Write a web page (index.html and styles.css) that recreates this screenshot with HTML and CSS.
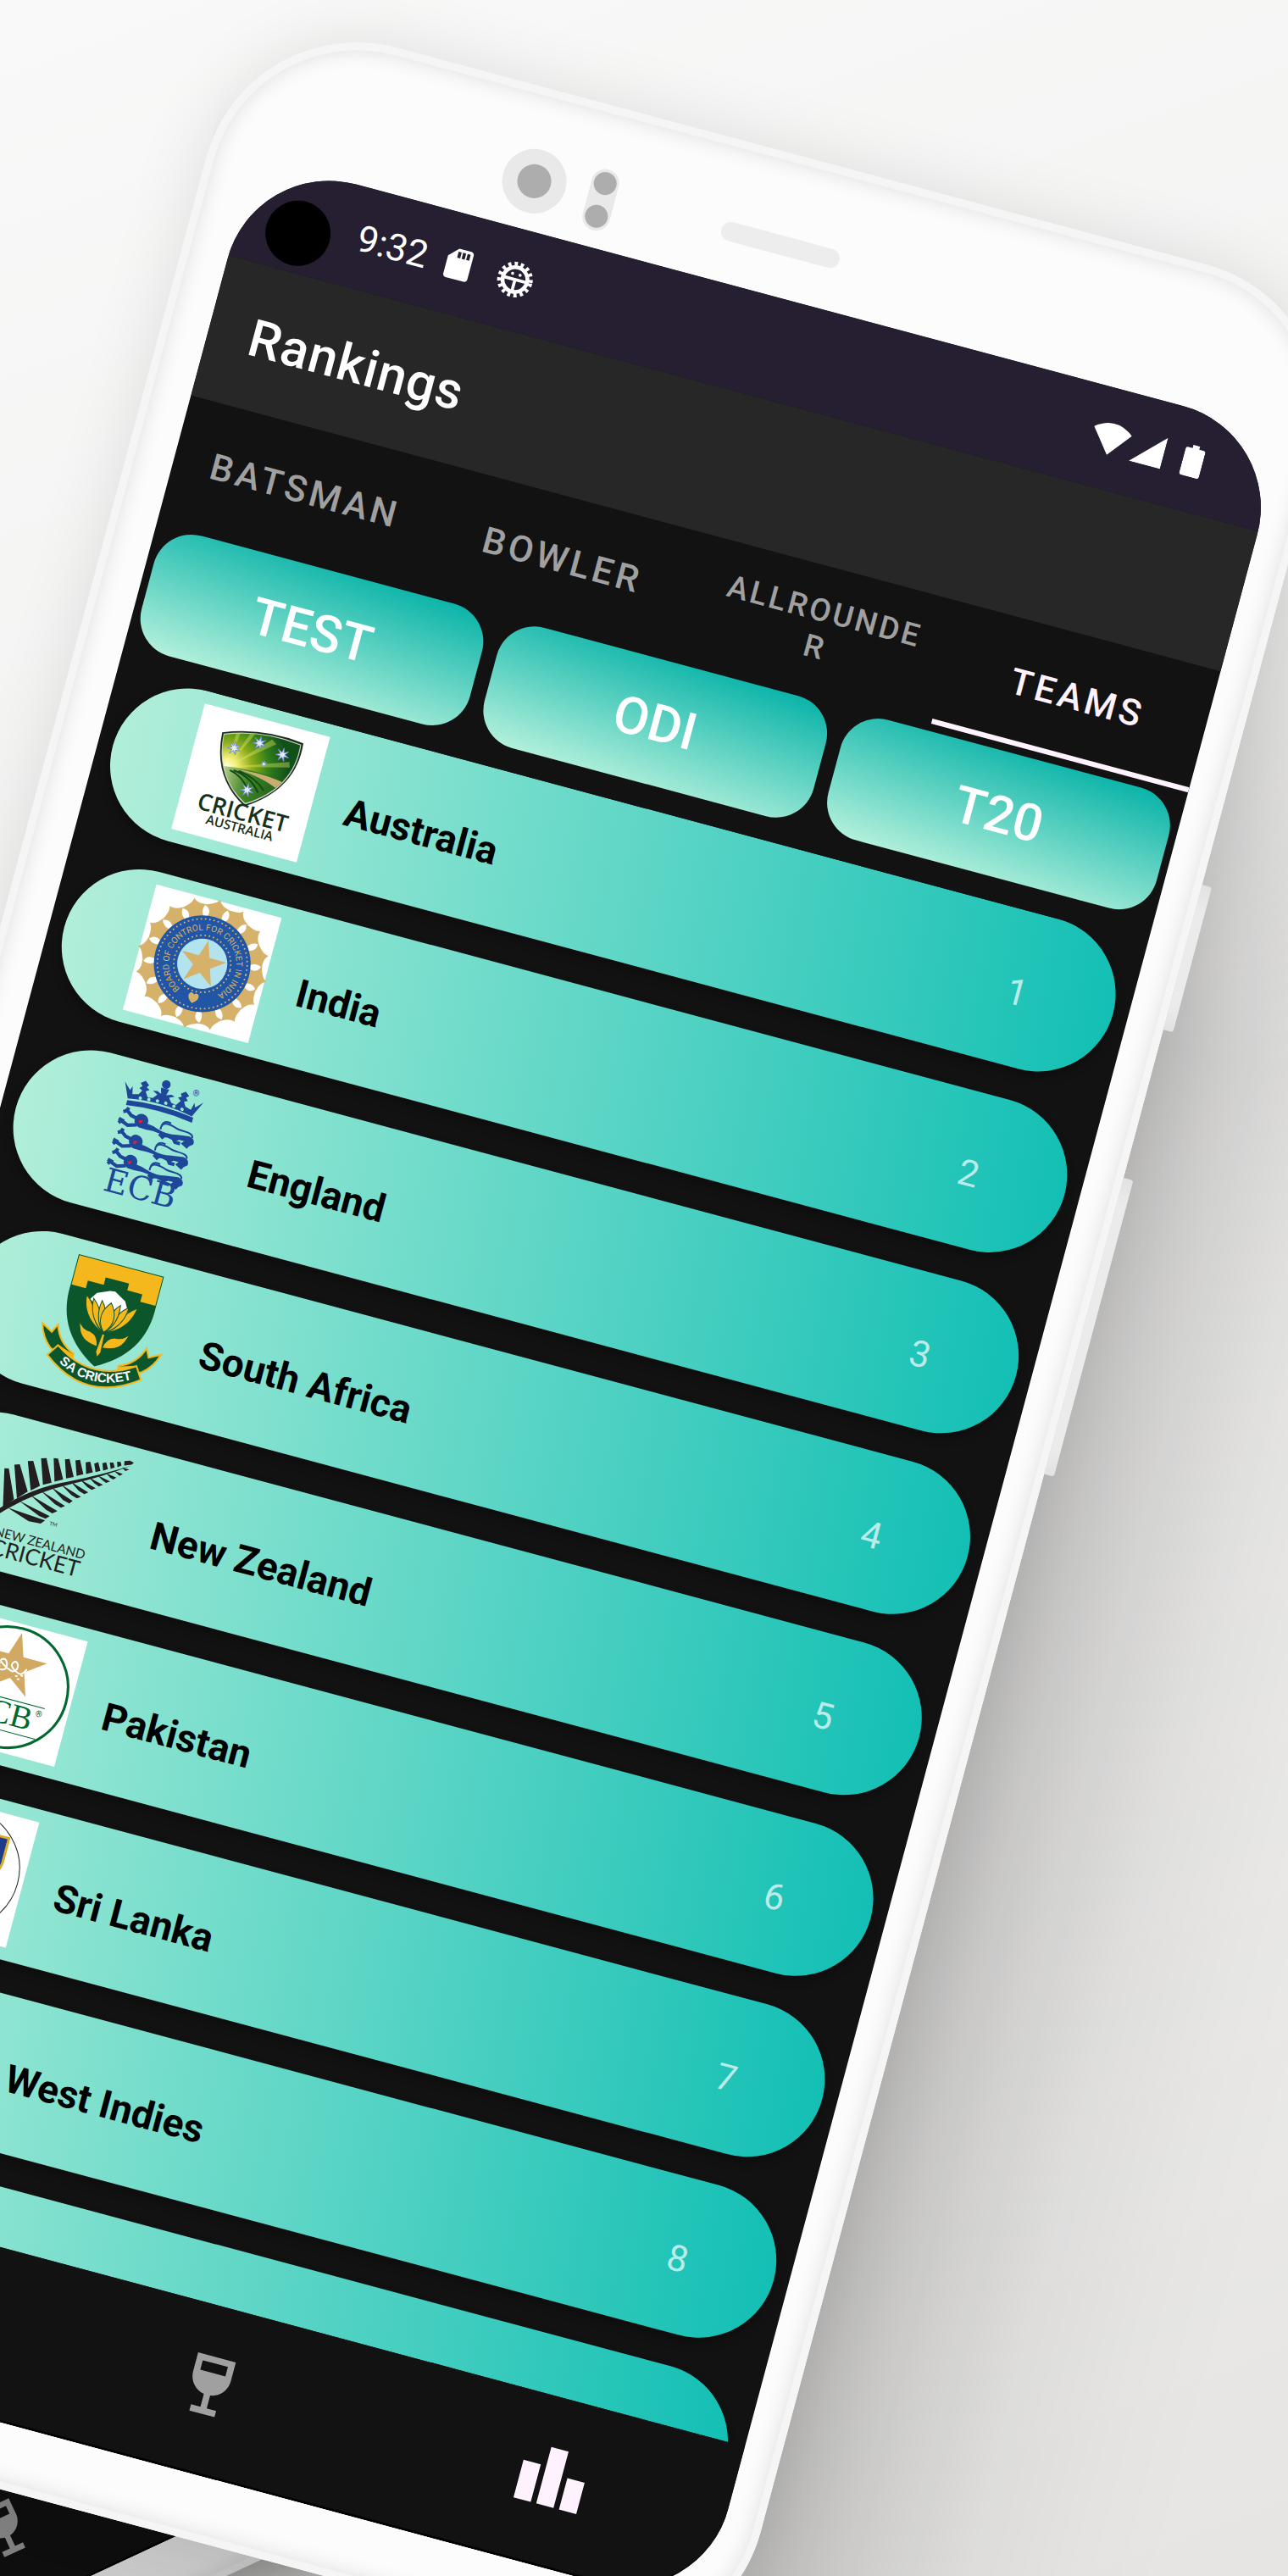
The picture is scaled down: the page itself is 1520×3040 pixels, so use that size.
FILE: index.html
```html
<!DOCTYPE html>
<html lang="en">
<head>
<meta charset="utf-8">
<meta name="viewport" content="width=device-width, initial-scale=1">
<title>Rankings</title>
<link rel="stylesheet" href="styles.css">
</head>
<body>
<svg class="defs" aria-hidden="true">
  <defs>
    <symbol id="i-cup" viewBox="0 0 24 24"><path d="M6 3v6c0 2.97 2.16 5.43 5 5.91V19H8v2h8v-2h-3v-4.09c2.84-.48 5-2.94 5-5.91V3H6zm10 5H8V5h8v3z"/></symbol>
    <symbol id="i-board" viewBox="0 0 24 24"><path d="M7.5 21H2V9h5.500v12zm7.250-18h-5.500v18h5.500V3zM22 11h-5.500v10H22V11z"/></symbol>
    <path id="star5" d="M0-10 2.250-3.090 9.510-3.090 3.630 1.180 5.880 8.090 0 3.820-5.880 8.090-3.630 1.180-9.510-3.090-2.250-3.090z"/>
    <path id="star7" d="M0-10 1.500-3.100 7.800-6.200 3.400-.8 9.700 2.200 2.700 2.200 4.300 9 0 3.500-4.300 9-2.700 2.200-9.700 2.200-3.400-.8-7.800-6.200-1.500-3.100z"/>
    <path id="petal" d="M-9-53C-6-60-8-65-15-67C-8-70-2-71 1-77C3-72 8-69 14-68C9-65 7-60 9-53Z"/>
    <g id="lion">
      <path d="M22 11Q34 9 46 13T70 14L84 12Q92 13 91 20L86 24 78 22 84 19 74 19 70 22 60 20 54 21 52 18 42 17Q32 18 24 17z"/>
      <path class="limb" d="M22 8L13 6 5 0M3 4l4-2 1-4M22 15L12 18 4 15M1 18l3-4-4-1M50 18l6 4M66 18l4 5h6M84 17l-4 5 6 3"/>
      <circle cx="26" cy="9" r="8"/>
      <path class="tail" d="M50 8q2-7 10-5M50 13c-2-12 12-8 18-6s20-1 20 6"/>
      <path class="tongue" d="M23 9l5-1-2 4h-2z"/>
    </g>
  </defs>
</svg>

<main class="stage">
  <div class="phone phone-back" aria-hidden="true">
    <div class="screen">
      <div class="filler"></div>
      <div class="nav"><span class="nav-item"><svg class="nav-icon"><use href="#i-cup"/></svg></span></div>
    </div>
  </div>

  <div class="cast"></div>

  <div class="phone phone-front">
    <span class="side-key power"></span>
    <span class="side-key volume"></span>
    <span class="lens"></span>
    <span class="sensor"></span>
    <span class="speaker"></span>

    <div class="screen">
      <div class="status">
        <span class="punch"></span>
        <span class="clock">9:32</span>
        <svg class="status-icon sd" viewBox="0 0 24 24"><path d="M18 2h-8L4 8v12c0 1.100.9 2 2 2h12c1.100 0 2-.9 2-2V4c0-1.100-.9-2-2-2zm-6 6h-2V4h2v4zm3 0h-2V4h2v4zm3 0h-2V4h2v4z"/></svg>
        <svg class="status-icon bug" viewBox="0 0 48 48">
          <circle class="teeth" cx="24" cy="24" r="20"/>
          <circle class="ring" cx="24" cy="24" r="16"/>
          <path class="line" d="M8 24h32M24 24v16"/>
          <circle cx="19" cy="17" r="2"/><circle cx="29" cy="17" r="2"/>
        </svg>
        <span class="spacer"></span>
        <svg class="wifi" viewBox="0 0 46 38"><path d="M0 9Q23-9 46 9L23 38z"/></svg>
        <svg class="signal" viewBox="0 0 38 38"><path d="M38 0v38H0z"/></svg>
        <svg class="battery" viewBox="0 0 24 38"><path d="M8 0h8v4h5q3 0 3 3v28q0 3-3 3H3q-3 0-3-3V7q0-3 3-3h5z"/></svg>
      </div>

      <header class="appbar"><h1>Rankings</h1></header>

      <nav class="tabs">
        <button class="tab">BATSMAN</button>
        <button class="tab">BOWLER</button>
        <button class="tab tab-small">ALLROUNDE<br>R</button>
        <button class="tab active">TEAMS</button>
      </nav>

      <div class="formats">
        <button class="format">TEST</button>
        <button class="format">ODI</button>
        <button class="format">T20</button>
      </div>

      <ol class="teams">
        <li class="team">
          <svg class="logo boxed" viewBox="0 0 150 150">
            <defs>
              <radialGradient id="sun" gradientUnits="userSpaceOnUse" cx="44" cy="64" r="70"><stop offset="0" stop-color="#fffff0"/><stop offset=".15" stop-color="#f4f07a"/><stop offset=".4" stop-color="#8fae1a"/><stop offset=".7" stop-color="#2f7d1a"/><stop offset="1" stop-color="#12501a"/></radialGradient>
              <linearGradient id="field" x1="0" y1="0" x2="1" y2="0"><stop offset="0" stop-color="#dfe8b0"/><stop offset=".4" stop-color="#3f8426"/><stop offset="1" stop-color="#0f4d18"/></linearGradient>
              <clipPath id="shield"><path d="M31 29Q73 12 119 18Q124 68 75 99Q34 78 31 29z"/></clipPath>
            </defs>
            <path fill="#1c2c1c" d="M28 27Q73 9 122 15Q128 69 75 103Q31 80 28 27z"/>
            <path fill="#c9d3c4" d="M30 28Q73 11 120 17Q126 69 75 101Q33 79 30 28z"/>
            <g clip-path="url(#shield)">
              <path fill="url(#sun)" d="M20 10h110v95H20z"/>
              <path fill="#e8ea60" opacity=".4" d="M44 64L44 20 49 20zM44 64L62 14 68 14zM44 64L86 20 92 24zM44 64L112 40 114 46z"/>
              <path fill="url(#field)" d="M30 66Q80 56 130 66V110H30z"/>
              <path fill="#c8ad72" d="M52 64Q90 60 116 66L110 76Q86 64 52 64z"/>
              <path fill="none" stroke="#124c14" stroke-width="2" d="M52 66Q74 68 86 84M58 65Q80 68 92 80M48 67Q64 70 74 84"/>
            </g>
            <g fill="#e4ecff" stroke="#6f86d8" stroke-width="1">
              <use href="#star7" transform="translate(46 41) scale(.8)"/><use href="#star7" transform="translate(73 28) scale(.8)"/>
              <use href="#star7" transform="translate(102 34) scale(.8)"/><use href="#star7" transform="translate(84 50) scale(.4)"/>
              <use href="#star7" transform="translate(73 84) scale(.8)"/>
            </g>
            <text class="ca-1" x="75" y="120">CRICKET</text>
            <text class="ca-2" x="76" y="134">AUSTRALIA</text>
          </svg>
          <span class="name">Australia</span><span class="rank">1</span>
        </li>
        <li class="team">
          <svg class="logo boxed" viewBox="0 0 150 150">
            <defs><path id="ring-text" d="M75 114a39 39 0 1 1 1 0"/></defs>
            <g transform="translate(75 75)" fill="#d6b169">
              <g id="quarter"><use href="#petal"/><use href="#petal" transform="rotate(22.500)"/><use href="#petal" transform="rotate(45)"/><use href="#petal" transform="rotate(67.500)"/></g>
              <use href="#quarter" transform="rotate(90)"/><use href="#quarter" transform="rotate(180)"/><use href="#quarter" transform="rotate(270)"/>
            </g>
            <circle cx="75" cy="75" r="56" fill="#2155a5"/>
            <circle class="dots" cx="75" cy="75" r="52"/>
            <circle class="dots" cx="75" cy="75" r="33"/>
            <circle cx="75" cy="75" r="29" fill="#b3e3ee"/>
            <use href="#star5" transform="translate(75 75) scale(2.800)" fill="#d6b169"/>
            <path fill="#d6b169" d="M75 122c-9-6-6-12-3-12q2 0 3 2q1-2 3-2c3 0 6 6-3 12z"/>
            <text class="bcci"><textPath href="#ring-text" startOffset="18">BOARD OF CONTROL FOR CRICKET IN INDIA</textPath></text>
          </svg>
          <span class="name">India</span><span class="rank">2</span>
        </li>
        <li class="team">
          <svg class="logo" viewBox="0 0 150 150">
            <g fill="#1f4799">
              <path d="M32 33Q71 27 111 33V39Q71 33 32 39z"/>
              <path d="M24 13l8 8 2-5 2 9 7-2 3-5-4-2 3-3-3-3 5-4 5 4-2 3 4 2-4 3 4 6 6-1 4-5-6-3 5-1 5 2-2-7 10 0-2 7 6-2 4 1-6 3 4 5 6 1 4-6-4-3 4-2-2-3 5-4 5 4-3 3 3 3-4 2 3 5 7 2 2-9 2 5 8-8-9 19Q71 24 32 31z"/>
              <circle cx="71" cy="4" r="5"/>
              <use href="#lion" transform="translate(28 43)"/><use href="#lion" transform="translate(28 68)"/><use href="#lion" transform="translate(28 92)"/>
            </g>
            <g fill="#98e6d3"><circle cx="46" cy="27" r="2"/><circle cx="56" cy="26" r="2"/><circle cx="66" cy="25" r="2"/><circle cx="76" cy="25" r="2"/><circle cx="86" cy="26" r="2"/><circle cx="96" cy="27" r="2"/></g>
            <text class="ecb" x="73" y="141">ECB</text>
            <text class="mark" x="103" y="8">®</text>
          </svg>
          <span class="name">England</span><span class="rank">3</span>
        </li>
        <li class="team">
          <svg class="logo" viewBox="0 0 150 150">
            <path fill="#0c562c" d="M24 3H126V38C128 80 108 106 75 124C42 106 22 80 24 38z"/>
            <path fill="#f4b81c" d="M25 4H125V38H107V29H89V21H61V30H42V39H25z"/>
            <path fill="#fff" d="M50 50L56 41 70 35 76 34 90 42 98 56 76 66z"/>
            <g fill="#f4b81c" stroke="#0c562c" stroke-width="1">
              <path d="M70 82C54 74 46 62 45 46Q56 54 60 66Q62 76 72 82zM80 82C96 74 104 62 106 46Q94 54 90 66Q88 76 78 82z"/>
              <path d="M72 82C58 72 54 60 54 48Q64 56 68 68zM78 82C92 72 96 60 96 48Q86 56 82 68z"/>
              <path d="M73 82C64 72 62 60 64 48Q72 56 73 70zM77 82C86 72 88 60 86 48Q78 56 77 70z"/>
              <path d="M75 83C64 72 66 58 75 48C84 58 86 72 75 83z"/>
              <path d="M72 101C56 100 48 94 45 77Q50 86 60 86Q70 88 72 101zM78 101C94 100 102 94 105 77Q100 86 90 86Q80 88 78 101z"/>
              <path d="M74 85h3l1 22-3 6-3-6z"/>
            </g>
            <g fill="#0c562c" stroke="#f4b81c" stroke-width="2">
              <path d="M4 91L17 98 22 88Q28 108 48 116L46 124Q30 122 20 116Q8 106 4 91zM146 91L133 98 128 88Q122 108 102 116L104 124Q120 122 130 116Q142 106 146 91z"/>
              <path fill="#f4b81c" d="M30 112L48 118V126L32 122zM120 112L102 118V126L118 122z"/>
              <path d="M19 125L28 111Q75 143 122 111L131 125Q75 168 19 125z"/>
            </g>
            <path id="sa-arc" fill="none" d="M28 126Q75 156 126 124"/>
            <text class="sa"><textPath href="#sa-arc" startOffset="7">SA CRICKET</textPath></text>
          </svg>
          <span class="name">South Africa</span><span class="rank">4</span>
        </li>
        <li class="team">
          <svg class="logo" viewBox="0 0 150 150">
            <g fill="#231f20">
              <path d="M15 92L5 48 10 47 25 80zM28 78L15 41 21 39 38 67zM41 65L29 33 35 31 50 57zM53 55L43 26 49 24 62 50zM65 48L57 22 62 21 74 43zM77 41L70 20 75 18 85 37zM88 35L82 18 87 16 95 31zM98 30L94 17 99 15 105 26zM108 25L104 16 108 13 113 22zM116 21L113 13 117 11 121 18zM124 17L121 10 125 9 128 14zM131 13L129 7 133 6 135 10zM138 9L137 4 143 2 148 3 146 6z"/>
              <path d="M20 91L66 94 62 99 48 100zM31 80L70 88 66 92 58 91zM42 70L77 80 72 84 64 82zM52 62L84 72 80 75 72 73zM63 55L91 64 88 68 80 66zM73 49L99 57 95 60 88 58zM83 43L106 50 102 53 95 51zM93 38L113 43 109 46 103 44zM102 33L120 37 116 40 110 38zM111 28L127 31 123 34 118 32zM120 23L133 25 130 28 126 27zM128 18L139 19 136 22zM136 12L145 12 141 15z"/>
              <path d="M8 98Q40 62 80 44Q120 24 146 7Q118 28 82 47Q44 67 12 101z"/>
            </g>
            <text class="nz-tm" x="72" y="98">TM</text>
            <text class="nz-1" x="121" y="126">NEW ZEALAND</text>
            <text class="nz-2" x="119" y="148">CRICKET</text>
          </svg>
          <span class="name">New Zealand</span><span class="rank">5</span>
        </li>
        <li class="team">
          <svg class="logo boxed" viewBox="0 0 150 150">
            <circle cx="74" cy="75" r="70" fill="none" stroke="#00692f" stroke-width="3"/>
            <use href="#star5" transform="translate(74 49) scale(3.900)" fill="#d1a962"/>
            <path fill="none" stroke="#fff" stroke-width="2" stroke-linecap="round" d="M58 50q-3 8 4 7t4-9q-2-5-6-3t3 6 12 5q6-3 4-9-3-5-6-1t4 8 9 2 4-6M80 60h1M86 58h1M83 63h1"/>
            <path stroke="#00692f" d="M28 88H122M28 125H120"/>
            <text class="pcb" x="75" y="117">PCB</text>
            <text class="mark pcb-mark" x="113" y="99">®</text>
          </svg>
          <span class="name">Pakistan</span><span class="rank">6</span>
        </li>
        <li class="team">
          <svg class="logo boxed" viewBox="0 0 150 150">
            <circle cx="74" cy="75" r="70" fill="none" stroke="#222" stroke-width="1"/>
            <path fill="#1d3a8c" stroke="#d9ab2b" stroke-width="3" d="M28 27H121V56Q119 80 75 104Q30 80 28 56z"/>
          </svg>
          <span class="name">Sri Lanka</span><span class="rank">7</span>
        </li>
        <li class="team"><span class="logo"></span><span class="name">West Indies</span><span class="rank">8</span></li>
        <li class="team"></li>
      </ol>

      <nav class="nav">
        <button class="nav-item" aria-label="Series"><svg class="nav-icon"><use href="#i-cup"/></svg></button>
        <button class="nav-item current" aria-label="Rankings"><svg class="nav-icon"><use href="#i-board"/></svg></button>
      </nav>
    </div>
  </div>
</main>
</body>
</html>
```
FILE: styles.css
```css
* { box-sizing: border-box; }

body {
  margin: 0;
  font-family: Roboto, "Liberation Sans", sans-serif;
  background: #f3f3f2;
}

button {
  margin: 0;
  padding: 0;
  border: 0;
  background: none;
  color: inherit;
  font: inherit;
}

.defs { position: absolute; width: 0; height: 0; }

.stage {
  position: relative;
  min-height: 100vh;
  overflow: hidden;
  background: linear-gradient(160deg, #f9f9f9 0%, #f3f3f2 30%, #e6e5e3 100%);
}

/* Device shell */
.phone {
  position: absolute;
  width: 1357px;
  padding: 168px 44px 76px 55px;
  border-radius: 184px;
  background: #fcfcfc;
  transform-origin: 0 0;
}

.phone::before {
  content: "";
  position: absolute;
  inset: 9px;
  border-radius: 175px;
  box-shadow: 0 0 0 9px #f5f5f5, inset 0 0 24px rgba(0, 0, 0, .12);
}

.phone-front {
  left: 291px;
  top: 9px;
  transform: rotate(15deg);
  box-shadow: 0 0 80px rgba(0, 0, 0, .1);
}

.phone-back {
  left: -1562px;
  top: 1057px;
  height: 2904px;
  transform: rotate(-25deg) scale(.885);
  box-shadow: 0 0 60px 30px rgba(0, 0, 0, .24);
}

/* Long shadow thrown to the right of the front device */
.cast {
  position: absolute;
  left: 291px;
  top: 9px;
  width: 2000px;
  height: 3400px;
  transform: rotate(15deg);
  transform-origin: 0 0;
  background: linear-gradient(to right,
    rgba(0, 0, 0, .2) 1357px,
    rgba(0, 0, 0, .16) 1410px,
    rgba(0, 0, 0, .1) 1490px,
    rgba(0, 0, 0, .04) 1610px,
    rgba(0, 0, 0, .01) 1730px,
    rgba(0, 0, 0, 0) 1830px);
  -webkit-mask-image: linear-gradient(transparent 100px, #000 900px);
  mask-image: linear-gradient(transparent 100px, #000 900px);
}

.side-key {
  position: absolute;
  left: 100%;
  width: 12px;
  border-radius: 0 3px 3px 0;
  background: linear-gradient(#e2e2e2, #ebebeb 32px, #ebebeb calc(100% - 32px), #e2e2e2);
}
.power { top: 708px; height: 177px; }
.volume { top: 1066px; height: 362px; }

.lens {
  position: absolute;
  left: 343px;
  top: 72px;
  width: 76px;
  height: 76px;
  border: 18px solid #e9e9e9;
  border-radius: 50%;
  background: #adadad;
}

.sensor {
  position: absolute;
  left: 446px;
  top: 74px;
  width: 33px;
  height: 74px;
  border-radius: 17px;
  background:
    radial-gradient(circle at 50% 17px, #adadad 13px, transparent 14px),
    radial-gradient(circle at 50% 57px, #adadad 13px, transparent 14px),
    #e9e9e9;
}

.speaker {
  position: absolute;
  left: 609px;
  top: 96px;
  width: 144px;
  height: 23px;
  border-radius: 12px;
  background: #ededed;
}

.screen {
  position: relative;
  display: flex;
  flex-direction: column;
  height: 2660px;
  overflow: hidden;
  border-bottom: 3px solid #000;
  border-radius: 124px;
  background: #121212;
  color: #fff;
}

.filler { flex: 1; }

/* Status bar */
.status {
  display: flex;
  flex: none;
  align-items: center;
  height: 120px;
  padding: 0 84px 0 34px;
  background: #261f31;
  fill: #fff;
}
.punch {
  width: 77px;
  height: 77px;
  margin-top: 26px;
  border-radius: 50%;
  background: #000;
}
.clock { margin-left: 31px; font-size: 44px; line-height: 52px; }
.status-icon { width: 44px; height: 44px; }
.sd { margin-left: 16px; }
.bug { margin-left: 25px; }
.teeth { fill: none; stroke: #fff; stroke-width: 6; stroke-dasharray: 4 4; }
.ring { fill: none; stroke: #fff; stroke-width: 5; }
.line { fill: none; stroke: #fff; stroke-width: 4; }
.spacer { flex: 1; }
.wifi { width: 46px; height: 38px; }
.signal { width: 38px; height: 38px; margin-left: 4px; }
.battery { width: 24px; height: 38px; margin-left: 23px; }

.appbar {
  display: flex;
  flex: none;
  align-items: center;
  height: 171px;
  padding-left: 49px;
  background: #272727;
}
.appbar h1 { margin: 0; font-size: 61px; font-weight: 500; letter-spacing: 1px; line-height: 76px; }

/* Tabs */
.tabs { display: grid; flex: none; grid-template-columns: repeat(4, 1fr); height: 148px; }
.tab {
  padding-left: 4px;
  color: #a0a0a0;
  font-size: 43px;
  font-weight: 500;
  letter-spacing: 4px;
  line-height: 50px;
}
.tab-small { padding-top: 2px; font-size: 37px; line-height: 44px; letter-spacing: 3px; }
.tab.active { border-bottom: 6px solid #fef2ff; padding-top: 6px; color: #fef2ff; }

/* Match format buttons */
.formats {
  display: grid;
  flex: none;
  grid-template-columns: repeat(3, 1fr);
  gap: 18px;
  padding: 9px 9px 28px;
}
.format {
  height: 147px;
  border-radius: 46px;
  background: linear-gradient(185deg, #08b3a8, #b5f1dc);
  font-size: 61px;
  font-weight: 500;
}

/* Rankings list */
.teams {
  display: flex;
  flex: 1;
  flex-direction: column;
  gap: 38px;
  min-height: 0;
  margin: 0;
  padding: 0 18px;
  overflow: hidden;
  list-style: none;
}
.team {
  display: flex;
  flex: none;
  align-items: center;
  height: 183px;
  padding: 0 104px 0 92px;
  border-radius: 92px;
  background: linear-gradient(85deg, #b2efda, #12bfb4);
  box-shadow: 0 6px 12px rgba(0, 0, 0, .3);
}
.logo { flex: none; width: 153px; height: 153px; overflow: visible; }
.boxed { background: #fff; }
.name {
  flex: 1;
  margin-left: 40px;
  padding-top: 6px;
  color: #000;
  font-size: 46px;
  font-weight: 700;
  line-height: 58px;
}
.rank { padding-top: 8px; color: rgba(255, 255, 255, .7); font-size: 43px; line-height: 50px; }

/* Crest lettering */
.ca-1, .ca-2, .ecb, .pcb { text-anchor: middle; }
.ca-1 { fill: #17301a; font: 600 27px "Open Sans", sans-serif; }
.ca-2 { fill: #17301a; font: 600 15px "Open Sans", sans-serif; }
.dots { fill: none; stroke: #d6b169; stroke-width: 2; stroke-dasharray: 0 5; stroke-linecap: round; }
.bcci { fill: #d6b169; font: 10px Roboto, sans-serif; }
.ecb { fill: #1f4799; font: 38px "DejaVu Serif", serif; }
.mark { fill: #1f4799; font: 10px Roboto, sans-serif; }
.pcb-mark { fill: #00692f; }
.tail { fill: none; stroke: #1f4799; stroke-width: 2; }
.limb { fill: none; stroke: #1f4799; stroke-width: 4; }
.tongue { fill: #e8202c; }
.sa { fill: #fff; font: 700 15px "Liberation Sans", sans-serif; }
.nz-tm { fill: #231f20; font: 6px Lato, sans-serif; }
.nz-1, .nz-2 { fill: #231f20; text-anchor: end; }
.nz-1 { font: 15px Lato, sans-serif; }
.nz-2 { font: 26px Lato, sans-serif; }
.pcb { fill: #00692f; font: 38px "Liberation Serif", serif; }

/* Bottom navigation */
.nav {
  display: grid;
  flex: none;
  grid-template-columns: repeat(3, 1fr);
  align-items: center;
  height: 197px;
  padding-bottom: 10px;
  background: #121212;
}
.nav-item { display: flex; justify-content: center; color: #a0a0a0; }
.nav-item:first-child { grid-column: 2; }
.nav-item.current { color: #fef2ff; }
.nav-icon { width: 92px; height: 92px; fill: currentColor; }
```
